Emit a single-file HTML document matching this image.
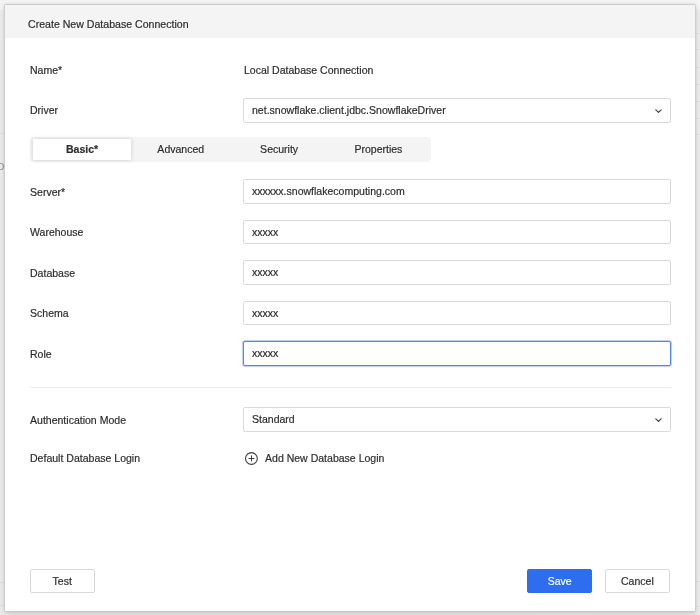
<!DOCTYPE html>
<html>
<head>
<meta charset="utf-8">
<title>Create New Database Connection</title>
<style>
*{box-sizing:border-box;margin:0;padding:0}
html,body{width:700px;height:615px;overflow:hidden}
body{position:relative;background:#ededed;font-family:"Liberation Sans",Arial,Helvetica,sans-serif;font-size:11.15px;color:#2e2e2e;-webkit-text-stroke:0.2px #2e2e2e;}
#root{position:absolute;left:0;top:0;width:700px;height:615px;will-change:transform}
.bgtop{position:absolute;left:0;top:0;width:700px;height:9.3px;background:#f3f3f3}
.bgch{position:absolute;left:-2.6px;top:158.2px;font-size:12.5px;line-height:16px;color:#999;-webkit-text-stroke:0}
.ln{position:absolute;height:1px;background:#e2e2e2}
.ln.l{left:0;width:6px}
.ln.r{left:694px;width:6px}
.dialog{position:absolute;left:4px;top:4px;width:692px;height:608px;background:#fff;border:1px solid;border-color:#cccccc #cfcfcf #c8c8c8 #cfcfcf;border-radius:2px;
  box-shadow:0 0 3px rgba(0,0,0,.1),0 4px 7px rgba(0,0,0,.1);}
.header{position:absolute;left:5px;top:5px;width:690px;height:33.2px;background:#f4f4f4;border-radius:1px 1px 0 0}
/* text helpers: condensed to mimic the narrower source typeface */
.t{display:inline-block;transform:scaleX(.945);transform-origin:0 50%;white-space:nowrap}
.tc{display:inline-block;transform:scaleX(.945);transform-origin:50% 50%;white-space:nowrap}
.row{position:absolute;height:20px;line-height:20px;white-space:nowrap}
.lbl{left:29.8px}
.inp{position:absolute;left:243px;width:427.5px;height:24.4px;border:1px solid #dadada;border-radius:2px;background:#fff;
  padding-left:8px;line-height:22.4px;white-space:nowrap}
.inp.focus{border-color:#5088f3;box-shadow:0 0 0 1px rgba(80,136,243,.38)}
.chev{position:absolute;right:7.9px;top:9.6px;width:7px;height:4.4px}
.tabs{position:absolute;left:29.5px;top:136.8px;width:401px;height:25px;background:#f4f4f4;border-radius:3px}
.tab{position:absolute;top:0;height:25px;line-height:24.6px;text-align:center;width:98.65px;white-space:nowrap}
.tab.active{top:2px;left:3.3px;width:98.4px;height:20.8px;line-height:20.6px;background:#fff;border-radius:1px;font-weight:bold;
  box-shadow:0 0 4px rgba(0,0,0,.17)}
.hr{position:absolute;left:30px;width:640.5px;top:387px;height:1px;background:#eaeaea}
.btn{position:absolute;top:568.8px;height:24.4px;width:65px;border:1px solid #d9d9d9;border-radius:2px;background:#fff;
  text-align:center;line-height:22.4px;white-space:nowrap}
.btn.primary{background:#2e6cf0;border-color:#2e6cf0;color:#fff;-webkit-text-stroke:0.2px #fff}
.add{position:absolute;left:244px;top:451px;height:15px;width:15px}
</style>
</head>
<body>
<div id="root">
<div class="bgtop"></div>
<div class="ln r" style="top:32.7px"></div>
<div class="ln r" style="top:49.3px"></div>
<div class="ln r" style="top:67px"></div>
<div class="ln r" style="top:84.4px"></div>
<div class="ln r" style="top:100.6px"></div>
<div class="ln r" style="top:117.5px"></div>
<div class="ln r" style="top:134.1px"></div>
<div class="ln r" style="top:581.4px"></div>
<div class="ln r" style="top:606px"></div>
<div class="ln l" style="top:133.1px"></div>
<div class="ln l" style="top:581.5px"></div>
<div class="ln l" style="top:605.2px"></div>
<div class="bgch">o</div>
<div class="dialog"></div>
<div class="header"></div>

<div class="row" style="left:27.7px;top:14.1px"><span class="t" style="transform:scaleX(.95)">Create New Database Connection</span></div>

<div class="row lbl" style="top:59.8px"><span class="t">Name*</span></div>
<div class="row" style="left:243.9px;top:59.8px"><span class="t">Local Database Connection</span></div>

<div class="row lbl" style="top:100.3px"><span class="t">Driver</span></div>
<div class="inp" style="top:98.2px"><span class="t">net.snowflake.client.jdbc.SnowflakeDriver</span>
  <svg class="chev" viewBox="0 0 7 4.4"><path d="M0.8 0.9 L3.5 3.4 L6.2 0.9" fill="none" stroke="#3a3a3a" stroke-width="1.15" stroke-linecap="round" stroke-linejoin="round"/></svg>
</div>

<div class="tabs">
  <div class="tab active"><span class="tc">Basic*</span></div>
  <div class="tab" style="left:102.05px"><span class="tc">Advanced</span></div>
  <div class="tab" style="left:200.7px"><span class="tc">Security</span></div>
  <div class="tab" style="left:299.35px"><span class="tc">Properties</span></div>
</div>

<div class="row lbl" style="top:181.5px"><span class="t">Server*</span></div>
<div class="inp" style="top:179.3px"><span class="t">xxxxxx.snowflakecomputing.com</span></div>

<div class="row lbl" style="top:222px"><span class="t">Warehouse</span></div>
<div class="inp" style="top:219.8px"><span class="t">xxxxx</span></div>

<div class="row lbl" style="top:262.5px"><span class="t">Database</span></div>
<div class="inp" style="top:260.3px"><span class="t">xxxxx</span></div>

<div class="row lbl" style="top:303px"><span class="t">Schema</span></div>
<div class="inp" style="top:300.8px"><span class="t">xxxxx</span></div>

<div class="row lbl" style="top:343.5px"><span class="t">Role</span></div>
<div class="inp focus" style="top:341.3px"><span class="t">xxxxx</span></div>

<div class="hr"></div>

<div class="row lbl" style="top:409.5px"><span class="t">Authentication Mode</span></div>
<div class="inp" style="top:407.2px"><span class="t">Standard</span>
  <svg class="chev" viewBox="0 0 7 4.4"><path d="M0.8 0.9 L3.5 3.4 L6.2 0.9" fill="none" stroke="#3a3a3a" stroke-width="1.15" stroke-linecap="round" stroke-linejoin="round"/></svg>
</div>

<div class="row lbl" style="top:447.9px"><span class="t">Default Database Login</span></div>
<svg class="add" viewBox="0 0 15 15"><circle cx="7.4" cy="7.5" r="5.9" fill="none" stroke="#3c3c3c" stroke-width="1.1"/><path d="M7.5 4.5V10.4M4.5 7.5H10.4" stroke="#3c3c3c" stroke-width="1" fill="none"/></svg>
<div class="row" style="left:264.7px;top:447.9px"><span class="t">Add New Database Login</span></div>

<div class="btn" style="left:29.6px"><span class="tc">Test</span></div>
<div class="btn primary" style="left:527px"><span class="tc">Save</span></div>
<div class="btn" style="left:605.3px"><span class="tc">Cancel</span></div>
</div>
</body>
</html>
